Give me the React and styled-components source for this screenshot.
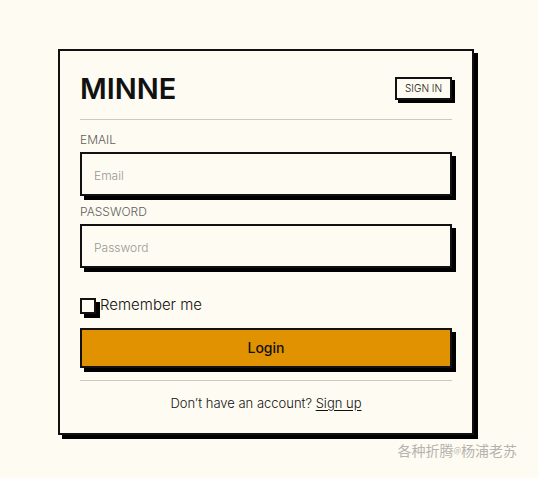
import React from "react";
import styled, { createGlobalStyle } from "styled-components";

const ink = "#111111";
const paper = "#fefbf2";

const GlobalStyle = createGlobalStyle`
  *, *::before, *::after { box-sizing: border-box; }
  body {
    margin: 0;
    background: ${paper};
    color: ${ink};
    font-family: Inter, "Liberation Sans", sans-serif;
    font-weight: 300;
  }
  button, input { font: inherit; color: inherit; }
`;

const Page = styled.main`
  padding: 49px 64px 0 58px;
`;

const Card = styled.form`
  display: flex;
  flex-direction: column;
  padding: 20px;
  border: 2px solid ${ink};
  box-shadow: 4px 4px 0 #000;
`;

const Header = styled.header`
  display: flex;
  align-items: center;
  justify-content: space-between;
  height: 36px;
`;

const Brand = styled.h1`
  margin: 0;
  font-size: 29px;
  line-height: 38px;
  font-weight: 600;
`;

const Tag = styled.button`
  height: 23px;
  margin-bottom: 2px;
  padding: 0 8px;
  border: 2px solid ${ink};
  background: ${paper};
  box-shadow: 3px 3px 0 #000;
  font-size: 10px;
  line-height: 19px;
  white-space: nowrap;
`;

const Divider = styled.hr`
  width: 100%;
  height: 1px;
  margin: 12px 0;
  border: 0;
  background: #cbc9c2;
`;

const Field = styled.div`
  display: flex;
  flex-direction: column;
  gap: 4px;
  margin-bottom: 8px;
`;

const Label = styled.label`
  font-size: 12px;
  line-height: 16px;
  color: #62605c;
`;

const TextInput = styled.input`
  width: 100%;
  height: 44px;
  padding: 2px 12px 0;
  border: 2px solid ${ink};
  border-radius: 0;
  background: ${paper};
  box-shadow: 4px 4px 0 #000;
  font-size: 12px;
  outline: 0;
  &::placeholder { color: #9a9893; opacity: 1; }
`;

const Remember = styled.label`
  display: flex;
  align-items: flex-start;
  gap: 4px;
  margin: 18px 0 12px;
  font-size: 15px;
  line-height: 22px;
`;

const Checkbox = styled.input`
  appearance: none;
  width: 16px;
  height: 16px;
  margin: 4px 0 0;
  border: 2px solid ${ink};
  background: ${paper};
  box-shadow: 4px 4px 0 #000;
  &:checked { background: ${ink}; }
`;

const Submit = styled.button`
  height: 40px;
  padding: 0;
  border: 2px solid ${ink};
  background: #e09200;
  box-shadow: 4px 4px 0 #000;
  font-size: 14px;
  line-height: 36px;
  font-weight: 500;
`;

const Prompt = styled.p`
  margin: 0;
  font-size: 13px;
  line-height: 20px;
  text-align: center;
`;

const Link = styled.a`
  color: inherit;
  text-underline-offset: 2px;
`;

const Credit = styled.footer`
  display: flex;
  align-items: center;
  justify-content: flex-end;
  margin: 5px 21px 0 0;
  font-family: "Noto Sans CJK SC", sans-serif;
  font-size: 14px;
  line-height: 20px;
  font-weight: 400;
  color: #b5b3af;
`;

const At = styled.span`
  font-size: 8px;
`;

export default function App() {
  return (
    <>
      <GlobalStyle />
      <Page>
        <Card onSubmit={(event) => event.preventDefault()}>
          <Header>
            <Brand>MINNE</Brand>
            <Tag type="button">SIGN IN</Tag>
          </Header>
          <Divider />
          <Field>
            <Label htmlFor="email">EMAIL</Label>
            <TextInput id="email" type="email" placeholder="Email" />
          </Field>
          <Field>
            <Label htmlFor="password">PASSWORD</Label>
            <TextInput id="password" type="password" placeholder="Password" />
          </Field>
          <Remember>
            <Checkbox type="checkbox" />
            Remember me
          </Remember>
          <Submit type="submit">Login</Submit>
          <Divider />
          <Prompt>
            Don’t have an account? <Link href="#signup">Sign up</Link>
          </Prompt>
        </Card>
      </Page>
      <Credit>
        各种折腾<At>@</At>杨浦老苏
      </Credit>
    </>
  );
}
